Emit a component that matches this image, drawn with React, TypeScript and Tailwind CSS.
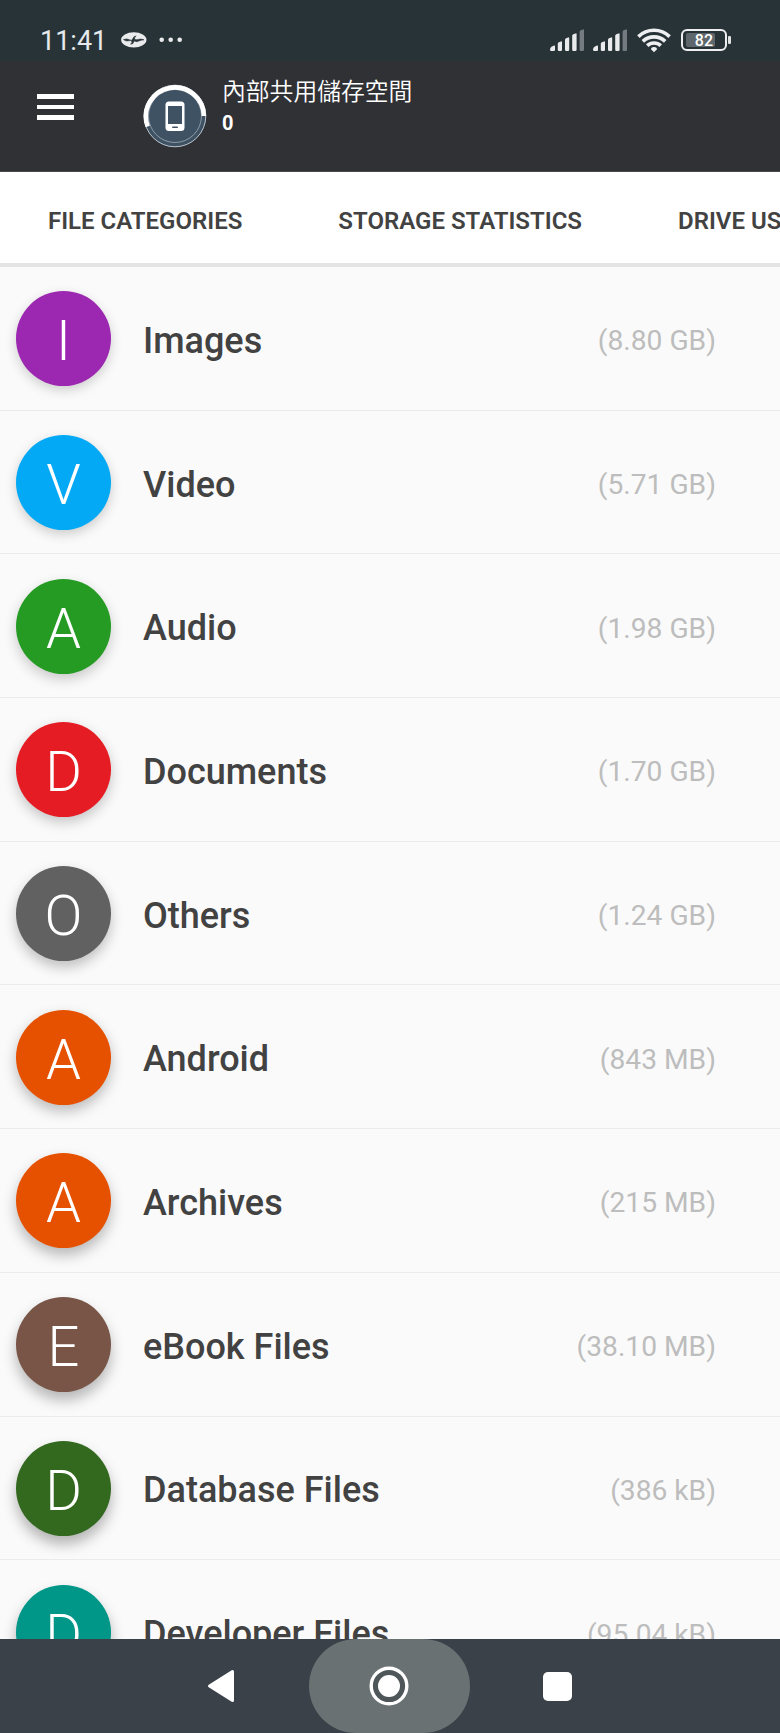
type Category = {
  name: string
  letter: string
  size: string
  color: string
  shadow: string
}

const categories: Category[] = [
  { name: 'Images', letter: 'I', size: '(8.80 GB)', color: 'bg-[#9c27b0]', shadow: 'shadow-[0_4px_12px_rgba(0,0,0,0.18)]' },
  { name: 'Video', letter: 'V', size: '(5.71 GB)', color: 'bg-[#03a9f4]', shadow: 'shadow-[0_4px_12px_rgba(0,0,0,0.19)]' },
  { name: 'Audio', letter: 'A', size: '(1.98 GB)', color: 'bg-[#259b24]', shadow: 'shadow-[0_5px_13px_rgba(0,0,0,0.2)]' },
  { name: 'Documents', letter: 'D', size: '(1.70 GB)', color: 'bg-[#e51c23]', shadow: 'shadow-[0_5px_13px_rgba(0,0,0,0.22)]' },
  { name: 'Others', letter: 'O', size: '(1.24 GB)', color: 'bg-[#616161]', shadow: 'shadow-[0_6px_13px_rgba(0,0,0,0.24)]' },
  { name: 'Android', letter: 'A', size: '(843 MB)', color: 'bg-[#e65100]', shadow: 'shadow-[0_6px_14px_rgba(0,0,0,0.26)]' },
  { name: 'Archives', letter: 'A', size: '(215 MB)', color: 'bg-[#e65100]', shadow: 'shadow-[0_7px_14px_rgba(0,0,0,0.27)]' },
  { name: 'eBook Files', letter: 'E', size: '(38.10 MB)', color: 'bg-[#795548]', shadow: 'shadow-[0_8px_14px_rgba(0,0,0,0.28)]' },
  { name: 'Database Files', letter: 'D', size: '(386 kB)', color: 'bg-[#33691e]', shadow: 'shadow-[0_8px_14px_rgba(0,0,0,0.29)]' },
  { name: 'Developer Files', letter: 'D', size: '(95.04 kB)', color: 'bg-[#009688]', shadow: 'shadow-[0_8px_14px_rgba(0,0,0,0.3)]' },
]

const tabs = ['FILE CATEGORIES', 'STORAGE STATISTICS', 'DRIVE USAGE']

const Signal = () => (
  <svg width="35" height="23" viewBox="0 0 35 23" fill="#e9ebec">
    <path d="M0 20.500q0-2 2-3l2-.9q1-.4 1 .6v3.600q0 1.200-1.200 1.200H1.200Q0 22 0 20.500z" />
    <path d="M7.800 14.800q0-1 1-1.500l2.200-.9q1-.4 1 .6v7.800q0 1.200-1.200 1.200H9q-1.200 0-1.200-1.200z" />
    <path d="M15 10.800q0-1 1-1.500l2.200-.9q1-.4 1 .6v11.800q0 1.200-1.200 1.200h-1.800q-1.200 0-1.200-1.200z" />
    <path d="M22.200 6.800q0-1 1-1.500l2.400-.9q1-.4 1 .6v15.800q0 1.200-1.200 1.200h-2q-1.200 0-1.200-1.200z" />
    <path d="M29.600 2.800q0-1 1-1.500L33 .4q1-.4 1 .6v19.800q0 1.200-1.200 1.200h-2q-1.200 0-1.200-1.200z" fill="#747c81" />
  </svg>
)

const Wifi = () => (
  <svg width="34" height="25" viewBox="0 0 34 25" fill="none" stroke="#edeff0" strokeWidth="3.600">
    <path d="M1.400 8.600a22.500 22.500 0 0 1 31.200 0" />
    <path d="M5.800 13.400a16.200 16.200 0 0 1 22.400 0" />
    <path d="M10.200 17.600a10 10 0 0 1 13.600 0" />
    <path d="M17 24.200l-2.800-2.600q-.6-2.600 2.800-2.600t2.800 2.600z" fill="#edeff0" stroke="none" />
  </svg>
)

const StatusBar = () => (
  <div className="flex h-[61px] items-start bg-[#283338] pl-[40px] text-[#e6eaec]">
    <span className="mt-[25px] w-[81px] text-[27px] leading-[32px]">11:41</span>
    <svg className="mt-[32px]" width="26" height="16" viewBox="0 0 26 16">
      <ellipse cx="12.800" cy="7.800" rx="12.700" ry="7.600" fill="#e9ebec" />
      <path
        d="M2.500 7.600q3.500-1.400 6 .2t3.300-1.200q.8-2.600 3.400-2.600-2 1.200-1.600 2.800.6 1.600 3.600.6 2.600-.8 5.800.4-3.200.2-5.200 1.200-2.400 1.200-3.600.2-1.400-.8-1.600 1-.4 2-3 2 1.800-1.200 1.200-2.800-.8-1.400-3.300-.6T2.500 7.600z"
        fill="#283338"
        stroke="#283338"
        strokeWidth=".6"
      />
    </svg>
    <svg className="mt-[37px] ml-[12px]" width="24" height="6" viewBox="0 0 24 6" fill="#e9ebec">
      <circle cx="2.700" cy="2.800" r="2.300" />
      <circle cx="11.700" cy="2.800" r="2.300" />
      <circle cx="20.700" cy="2.800" r="2.300" />
    </svg>
    <div className="mt-[28px] ml-auto flex pr-[49px]">
      <div className="mt-[1px] flex gap-[8px]">
        <Signal />
        <Signal />
      </div>
      <div className="ml-[9px]">
        <Wifi />
      </div>
      <div className="mt-[1px] ml-[10px] flex h-[22px] w-[46px] items-center rounded-[6px] border-2 border-[#edeff0] px-[3px]">
        <div className="flex h-[14px] w-[29px] items-center justify-end rounded-[2px] bg-[#5e676b]">
          <span className="mt-[2px] mr-[2px] text-[16px] leading-none font-medium text-white">82</span>
        </div>
      </div>
      <div className="mt-[8px] ml-[1px] h-[8px] w-[3px] rounded-[1px] bg-[#e0e3e4]" />
    </div>
  </div>
)

const Header = () => (
  <div className="flex h-[111px] items-start border-b border-[#4a4a4c] bg-[#303135] pl-[37px]">
    <div className="mt-[33px] flex w-[37px] flex-col gap-[6px]">
      <div className="h-[4.500px] bg-white" />
      <div className="h-[4.500px] bg-white" />
      <div className="h-[4.500px] bg-white" />
    </div>
    <svg className="mt-[23px] ml-[69px]" width="64" height="64" viewBox="0 0 64 64">
      <circle cx="32" cy="32" r="31" fill="#3f5263" />
      <circle cx="32" cy="32" r="30.800" fill="none" stroke="#b9c3cb" strokeWidth="1" />
      <circle cx="32" cy="32" r="26.500" fill="none" stroke="#8b9aa6" strokeWidth="1" />
      <path d="M4.700 42.500A29 29 0 1 1 60.900 32" fill="none" stroke="#fff" strokeWidth="4.600" />
      <rect x="22.500" y="17.500" width="19" height="29.500" rx="3.500" fill="#fff" />
      <rect x="25" y="22" width="14" height="18" fill="#3f5263" />
      <rect x="29" y="42.500" width="6" height="1.600" rx=".8" fill="#3f5263" />
    </svg>
    <div className="mt-[14px] ml-[15px] flex flex-col text-white">
      <span className="text-[23.800px] leading-[35px] font-[350]">內部共用儲存空間</span>
      <span className="text-[20px] leading-[26px] font-bold">0</span>
    </div>
  </div>
)

const NavBar = () => (
  <div className="grid h-[94px] shrink-0 grid-cols-[309px_161px_310px] bg-[#3a4148]">
    <div className="flex items-center justify-end pr-[74px]">
      <svg width="28" height="34" viewBox="0 0 28 34">
        <path d="M2.500 17L25.500 2.500V31.500z" fill="#fff" stroke="#fff" strokeWidth="3" strokeLinejoin="round" />
      </svg>
    </div>
    <div className="flex items-center justify-center rounded-full bg-[#697173] pr-[1px]">
      <svg width="40" height="40" viewBox="0 0 40 40">
        <circle cx="20" cy="20" r="19" fill="#4e5659" />
        <circle cx="20" cy="20" r="17.800" fill="none" stroke="#fff" strokeWidth="3.400" />
        <circle cx="20" cy="20" r="11" fill="#fff" />
      </svg>
    </div>
    <div className="flex items-center pl-[73px]">
      <div className="h-[29px] w-[29px] rounded-[5px] bg-white" />
    </div>
  </div>
)

const App = () => {
  return (
    <div className="flex h-[1733px] w-[780px] flex-col overflow-hidden bg-[#fafafa] font-['Roboto','Noto_Sans_CJK_TC',sans-serif]">
      <StatusBar />
      <Header />
      <div className="flex h-[95px] shrink-0 items-center gap-[96px] overflow-hidden border-b-4 border-[#e4e4e4] bg-white pt-[6px] pl-[48px]">
        {tabs.map((tab) => (
          <span key={tab} className="shrink-0 text-[24px] leading-[32px] font-semibold whitespace-nowrap text-[#424242]">
            {tab}
          </span>
        ))}
      </div>
      <div className="min-h-0 flex-1 overflow-hidden">
        {categories.map((item) => (
          <div
            key={item.name}
            className="flex h-[143.700px] items-center border-b border-[#ebebeb] pr-[64px] pl-[16px]"
          >
            <div
              className={`mt-[1px] flex h-[95px] w-[95px] items-center justify-center rounded-full pt-[5px] text-[56px] leading-none font-light text-white ${item.color} ${item.shadow}`}
            >
              {item.letter}
            </div>
            <span className="ml-[32px] pt-[5px] text-[36px] leading-[44px] font-medium text-[#424242]">{item.name}</span>
            <span className="ml-auto pt-[6px] text-[28.200px] leading-[36px] text-[#bdbdbd]">{item.size}</span>
          </div>
        ))}
      </div>
      <NavBar />
    </div>
  )
}

export default App
